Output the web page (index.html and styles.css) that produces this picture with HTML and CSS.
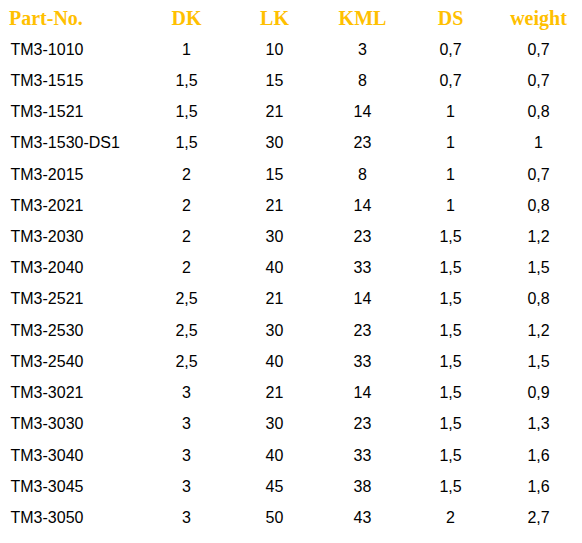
FILE: index.html
```html
<!DOCTYPE html>
<html>
<head>
<meta charset="utf-8">
<link rel="stylesheet" href="styles.css">
</head>
<body>
<div class="table">
  <div class="row head">
    <div class="c first">Part-No.</div><div class="c">DK</div><div class="c">LK</div><div class="c">KML</div><div class="c">DS</div><div class="c">weight</div>
  </div>
  <div class="row"><div class="c first">TM3-1010</div><div class="c">1</div><div class="c">10</div><div class="c">3</div><div class="c">0,7</div><div class="c">0,7</div></div>
  <div class="row"><div class="c first">TM3-1515</div><div class="c">1,5</div><div class="c">15</div><div class="c">8</div><div class="c">0,7</div><div class="c">0,7</div></div>
  <div class="row"><div class="c first">TM3-1521</div><div class="c">1,5</div><div class="c">21</div><div class="c">14</div><div class="c">1</div><div class="c">0,8</div></div>
  <div class="row"><div class="c first">TM3-1530-DS1</div><div class="c">1,5</div><div class="c">30</div><div class="c">23</div><div class="c">1</div><div class="c">1</div></div>
  <div class="row"><div class="c first">TM3-2015</div><div class="c">2</div><div class="c">15</div><div class="c">8</div><div class="c">1</div><div class="c">0,7</div></div>
  <div class="row"><div class="c first">TM3-2021</div><div class="c">2</div><div class="c">21</div><div class="c">14</div><div class="c">1</div><div class="c">0,8</div></div>
  <div class="row"><div class="c first">TM3-2030</div><div class="c">2</div><div class="c">30</div><div class="c">23</div><div class="c">1,5</div><div class="c">1,2</div></div>
  <div class="row"><div class="c first">TM3-2040</div><div class="c">2</div><div class="c">40</div><div class="c">33</div><div class="c">1,5</div><div class="c">1,5</div></div>
  <div class="row"><div class="c first">TM3-2521</div><div class="c">2,5</div><div class="c">21</div><div class="c">14</div><div class="c">1,5</div><div class="c">0,8</div></div>
  <div class="row"><div class="c first">TM3-2530</div><div class="c">2,5</div><div class="c">30</div><div class="c">23</div><div class="c">1,5</div><div class="c">1,2</div></div>
  <div class="row"><div class="c first">TM3-2540</div><div class="c">2,5</div><div class="c">40</div><div class="c">33</div><div class="c">1,5</div><div class="c">1,5</div></div>
  <div class="row"><div class="c first">TM3-3021</div><div class="c">3</div><div class="c">21</div><div class="c">14</div><div class="c">1,5</div><div class="c">0,9</div></div>
  <div class="row"><div class="c first">TM3-3030</div><div class="c">3</div><div class="c">30</div><div class="c">23</div><div class="c">1,5</div><div class="c">1,3</div></div>
  <div class="row"><div class="c first">TM3-3040</div><div class="c">3</div><div class="c">40</div><div class="c">33</div><div class="c">1,5</div><div class="c">1,6</div></div>
  <div class="row"><div class="c first">TM3-3045</div><div class="c">3</div><div class="c">45</div><div class="c">38</div><div class="c">1,5</div><div class="c">1,6</div></div>
  <div class="row"><div class="c first">TM3-3050</div><div class="c">3</div><div class="c">50</div><div class="c">43</div><div class="c">2</div><div class="c">2,7</div></div>
</div>
</body>
</html>
```

FILE: styles.css
```css
html, body {
  margin: 0;
  padding: 0;
  background: #ffffff;
}

.table {
  width: 582px;
  display: flex;
  flex-direction: column;
  padding-top: 1px;
}

.row {
  display: grid;
  grid-template-columns: 142.5px repeat(5, 88px);
  height: 31.23px;
  align-items: center;
  font-family: "Liberation Sans", Arial, sans-serif;
  font-size: 16px;
  color: #000000;
  line-height: 20px;
}

.row.head {
  height: 33.1px;
  font-family: "Liberation Serif", "Times New Roman", serif;
  font-weight: bold;
  font-size: 20px;
  color: #ffc000;
  line-height: 24px;
}

.c {
  text-align: center;
  white-space: nowrap;
}

.c.first {
  text-align: left;
  padding-left: 10.5px;
}

.head .c.first {
  padding-left: 9px;
}
```
